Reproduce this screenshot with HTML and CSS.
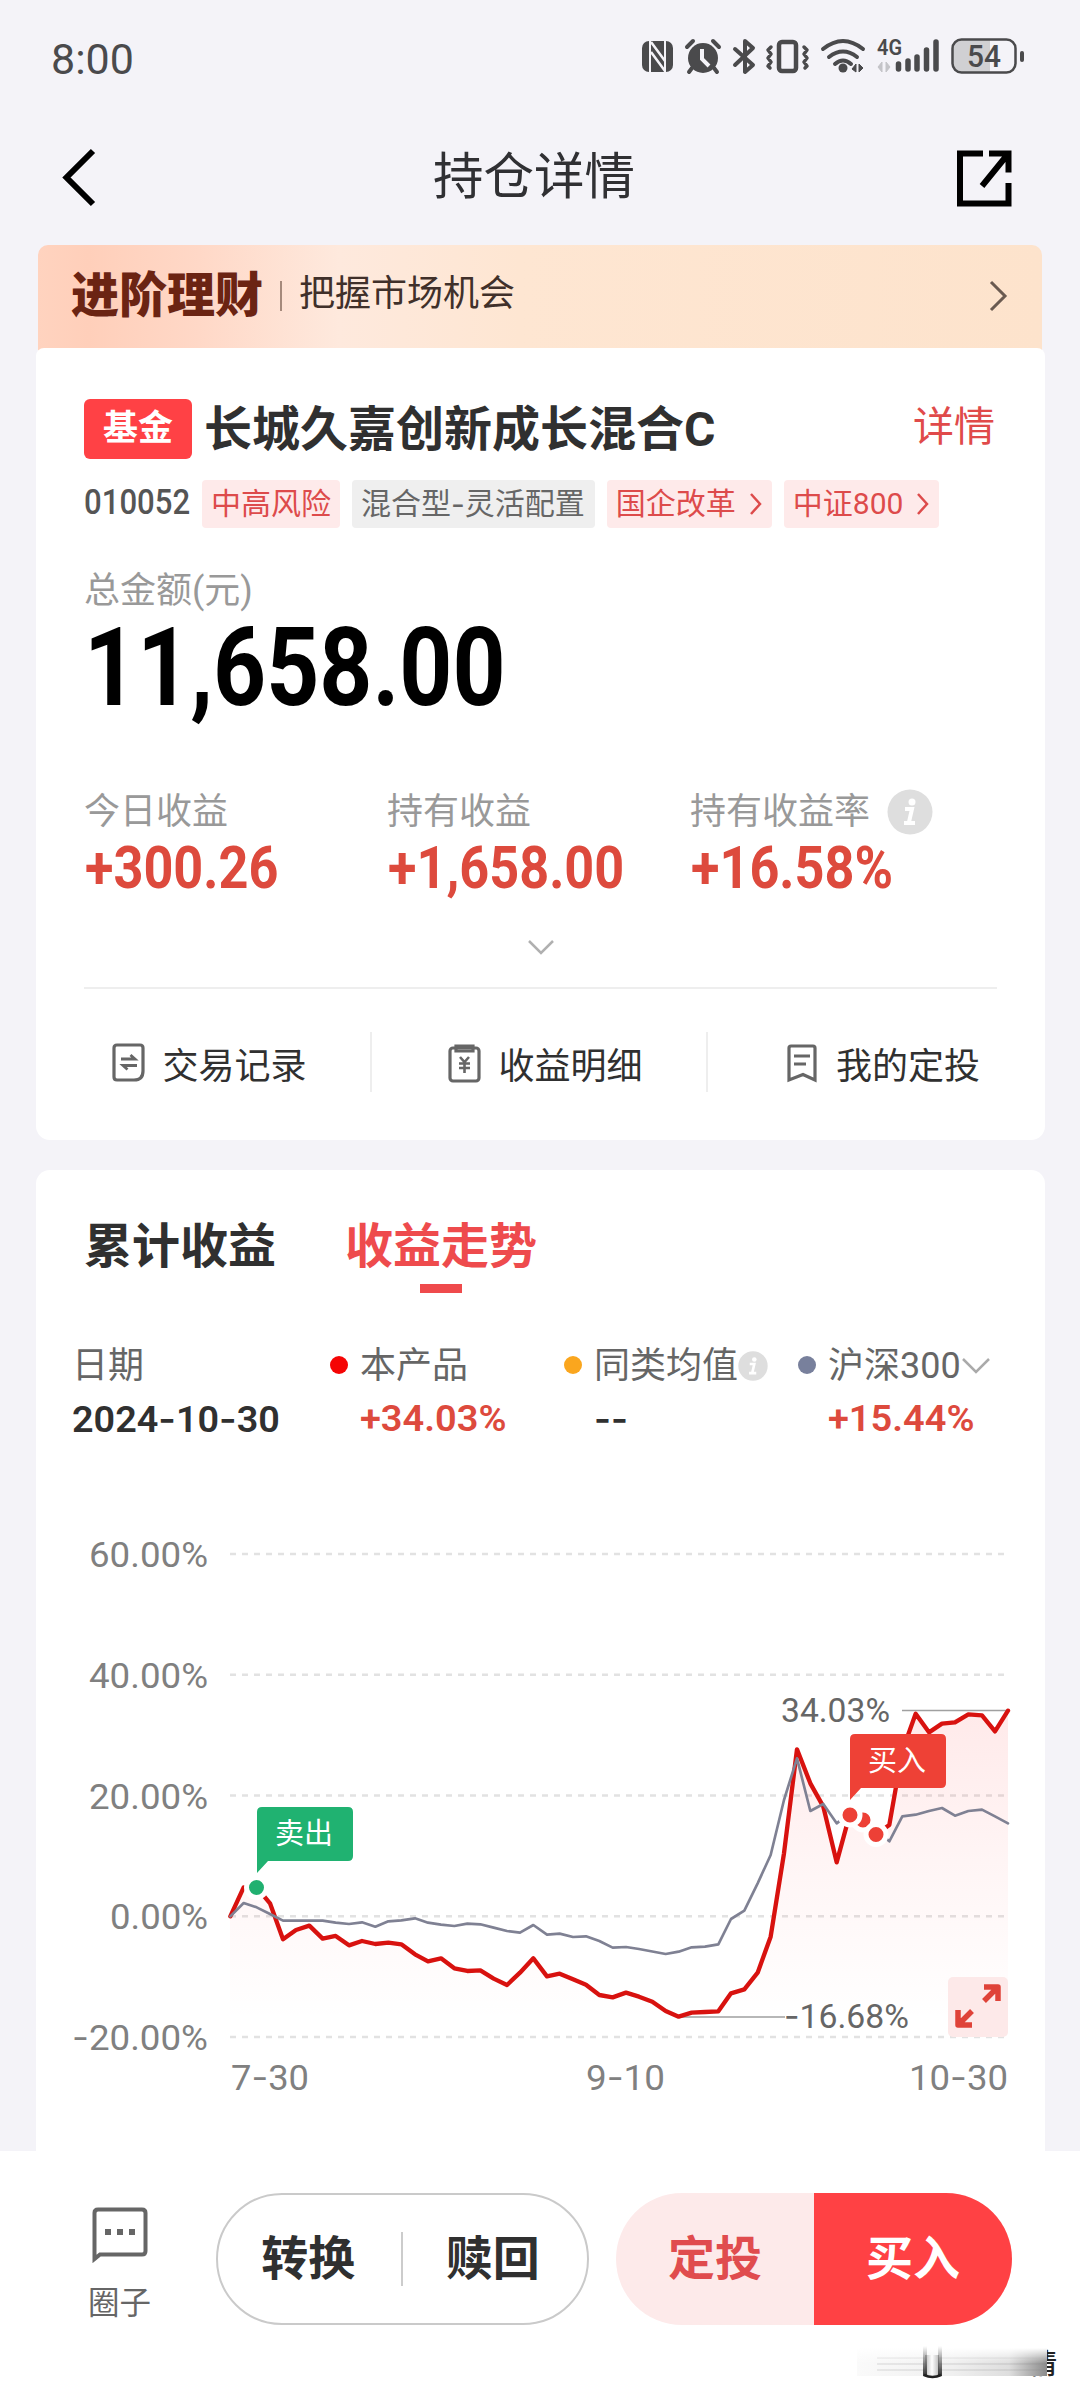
FILE: index.html
```html
<!DOCTYPE html>
<html lang="zh-CN">
<head>
<meta charset="utf-8">
<title>持仓详情</title>
<link rel="stylesheet" href="styles.css">
</head>
<body>
<div class="screen">
  <div class="status">
    <span class="clock">8:00</span>
    <svg class="status-icons" width="390" height="40" viewBox="0 0 390 40">
      <g fill="#4a4a4c">
        <rect x="2" y="2" width="31" height="31" rx="7"/>
        <path d="M10 2v31M25 2v31" stroke="#f4f3f8" stroke-width="2"/>
        <path d="M11 3l14 19M11 13l14 19" stroke="#f4f3f8" stroke-width="2.500"/>
        <circle cx="63" cy="19" r="15"/>
        <path d="M47 8l6-6M79 8l-6-6M52 29l-3 4M74 29l3 4" stroke="#4a4a4c" stroke-width="4" stroke-linecap="round"/>
        <path d="M62 10v10l7 7" fill="none" stroke="#f4f3f8" stroke-width="4"/>
      </g>
      <g fill="none" stroke="#4a4a4c" stroke-width="4" stroke-linejoin="round" stroke-linecap="round">
        <path d="M95 10l18 16-8 7V2l8 7-18 17"/>
        <rect x="139" y="3" width="17" height="29" rx="3" stroke-width="4.5"/>
        <path d="M131 8l-3 3 3 4-3 4 3 4-3 4 2 2M164 8l3 3-3 4 3 4-3 4 3 4-2 2" stroke-width="3.5"/>
        <path d="M183 10q20-16 40 0M189 18q14-11 28 0M195 25q8-7 16 0"/>
      </g>
      <circle cx="203" cy="29" r="4.500" fill="#4a4a4c"/>
      <path d="M212 30l4-5v8zM219 25v8l4-4z" fill="#4a4a4c" stroke="#4a4a4c"/>
      <path d="M238 28l4-5v10zM246 23v10l4-5z" fill="#c4c4c8" stroke="#c4c4c8"/>
      <text x="237" y="16" class="net" textLength="25" lengthAdjust="spacingAndGlyphs">4G</text>
      <path d="M258.500 25v5M268 22v8M277 18v12M286.500 11v19M296 3v27" stroke="#4a4a4c" stroke-width="5.500" stroke-linecap="round"/>
      <path d="M322 1h28v32h-28q-9 0-9-9V10q0-9 9-9z" fill="#d0d0d3"/>
      <rect x="312.500" width="63" height="33" y="0.500" rx="9" fill="none" stroke="#4a4a4c" stroke-width="2.500"/>
      <rect x="380" y="12" width="4" height="11" rx="2" fill="#4a4a4c"/>
      <text x="327" y="27.500" class="batt" textLength="34" lengthAdjust="spacingAndGlyphs">54</text>
    </svg>
  </div>

  <header class="nav">
    <svg width="60" height="60" viewBox="0 0 60 60"><path d="M39 4L12.500 30.500 39 57" fill="none" stroke="#000" stroke-width="6"/></svg>
    <h1>持仓详情</h1>
    <svg width="60" height="60" viewBox="0 0 60 60"><path d="M29 6.500H6v50H54.500V36M35 6.500h19.500v19M54 7L28 39" fill="none" stroke="#000" stroke-width="6"/></svg>
  </header>

  <div class="banner">
    <b>进阶理财</b><i></i><span>把握市场机会</span>
    <svg width="20" height="32" viewBox="0 0 20 32"><path d="M2 2l14 14L2 30" fill="none" stroke="#6a5a50" stroke-width="3"/></svg>
  </div>

  <section class="card holding">
    <div class="fund">
      <span class="badge">基金</span><h2>长城久嘉创新成长混合C</h2><a>详情</a>
    </div>
    <div class="tags">
      <span class="code"><span class="fit code-fit">010052</span></span>
      <span class="tag">中高风险</span>
      <span class="tag gray">混合型<em>-</em>灵活配置</span>
      <span class="tag link">国企改革<svg width="14" height="22" viewBox="0 0 14 22"><path d="M2 1l9 10-9 10" fill="none" stroke="#dd4b4b" stroke-width="2.500"/></svg></span>
      <span class="tag link">中证800<svg width="14" height="22" viewBox="0 0 14 22"><path d="M2 1l9 10-9 10" fill="none" stroke="#dd4b4b" stroke-width="2.500"/></svg></span>
    </div>
    <div class="label total-label">总金额(元)</div>
    <div class="total"><span class="fit total-fit">11,658.00</span></div>
    <div class="stats">
      <div><div class="label">今日收益</div><div class="gain"><span class="fit">+300.26</span></div></div>
      <div><div class="label">持有收益</div><div class="gain"><span class="fit">+1,658.00</span></div></div>
      <div><div class="label">持有收益率<svg class="info" width="46" height="46" viewBox="0 0 46 46"><circle cx="23" cy="23" r="22.500" fill="#dedede"/><circle cx="25" cy="13" r="3.500" fill="#fff"/><path d="M18 20h7l-3 13M17 34h11" fill="none" stroke="#fff" stroke-width="4"/></svg></div><div class="gain"><span class="fit">+16.58%</span></div></div>
    </div>
    <div class="expand"><svg width="28" height="18" viewBox="0 0 28 18"><path d="M2 2l12 12L26 2" fill="none" stroke="#b0b0b0" stroke-width="2.500"/></svg></div>
    <div class="actions">
      <div><svg width="36" height="42" viewBox="0 0 36 42"><g fill="none" stroke="#666" stroke-width="3.200"><path d="M6 3h23q3 0 3 3v23q0 9-9 9H6q-3 0-3-3V6q0-3 3-3z"/><path d="M10 17h14l-4.500-4M26 23.500H12l4.500 4" stroke-width="2.800"/></g></svg>交易记录</div>
      <div><svg width="36" height="42" viewBox="0 0 36 42"><g fill="none" stroke="#666" stroke-width="3.200"><rect x="3" y="6" width="29" height="33" rx="3"/><path d="M9 4h17v5H9z"/><path d="M13 15l4.500 5 4.500-5M17.500 20v11M12 21.500h11M12 26h11" stroke-width="2.600"/></g></svg>收益明细</div>
      <div><svg width="36" height="42" viewBox="0 0 36 42"><g fill="none" stroke="#666" stroke-width="3.200"><path d="M6 4h22q2 0 2 2v32l-12-5.500L4 38V6q0-2 2-2z"/><path d="M9 14h16M9 22h12"/></g></svg>我的定投</div>
    </div>
  </section>

  <section class="card trend">
    <div class="tabs"><h3>累计收益</h3><h3 class="on">收益走势</h3></div>
    <div class="legend">
      <div><p>日期</p><strong><span class="fit date">2024<em>-</em>10<em>-</em>30</span></strong></div>
      <div class="dot red"><p>本产品</p><strong class="up"><span class="fit">+34.03%</span></strong></div>
      <div class="dot orange"><p>同类均值<svg class="mini" width="30" height="30" viewBox="0 0 46 46"><circle cx="23" cy="23" r="22.500" fill="#dedede"/><circle cx="25" cy="13" r="3.500" fill="#fff"/><path d="M18 20h7l-3 13M17 34h11" fill="none" stroke="#fff" stroke-width="4"/></svg></p><strong><em>--</em></strong></div>
      <div class="dot blue"><p>沪深300<svg width="30" height="18" viewBox="0 0 30 18"><path d="M2 2l13 13L28 2" fill="none" stroke="#aaa" stroke-width="2.500"/></svg></p><strong class="up"><span class="fit">+15.44%</span></strong></div>
    </div>
    <svg class="chart" width="1009" height="640" viewBox="36 1500 1009 640">
      <defs>
        <linearGradient id="area" x1="0" y1="1710" x2="0" y2="2020" gradientUnits="userSpaceOnUse">
          <stop offset="0" stop-color="#ff3c3c" stop-opacity=".11"/>
          <stop offset=".5" stop-color="#ff3c3c" stop-opacity=".05"/>
          <stop offset="1" stop-color="#ff3c3c" stop-opacity="0"/>
        </linearGradient>
      </defs>
      <path class="grid" d="M230 1554H1008M230 1674.700H1008M230 1795.600H1008M230 1916.300H1008M230 2037H1008"/>
      <path fill="url(#area)" d="M230 2037V1916L244 1888 257 1888 270 1903 283 1939 296 1930 309 1926 323 1939 336 1936 349 1945 375 1943 401 1944 428 1961 454 1968 480 1970 507 1985 533 1958 547 1976 560 1974 586 1985 612 1997 626 1993 652 2002 679 2017 718 2011 731 1993 744 1989 758 1973 771 1937 784 1853 797 1749 810 1783 823 1807 837 1862 850 1815 863 1820 876 1834 889 1825 902 1750 916 1714 929 1732 942 1724 968 1714 982 1715 995 1731 1008 1711V2037z"/>
      <path class="leader" d="M902 1710.500H1007M679 2017H785"/>
      <g transform="translate(200 1680) scale(.33333)" fill="none" stroke-linejoin="round" stroke-linecap="round">
        <polyline stroke="#d8120f" stroke-width="13" points="91,709 131,622 170,622 210,670 249,778 288,750 328,737 368,776 407,768 447,796 486,783 526,792 565,788 604,793 645,823 684,844 723,835 763,865 802,873 841,871 881,896 921,915 960,878 1000,835 1041,889 1079,881 1119,898 1158,914 1198,945 1238,952 1278,938 1317,950 1357,965 1397,993 1436,1010 1475,998 1515,996 1555,994 1593,940 1633,928 1673,878 1712,770 1752,520 1791,208 1831,310 1870,380 1910,547 1949,404 1988,420 2028,463 2068,435 2107,213 2147,101 2187,157 2226,131 2265,127 2305,103 2346,106 2385,154 2424,92"/>
        <polyline stroke="#7f8193" stroke-width="8" points="91,709 131,669 170,682 210,702 249,722 368,722 407,728 447,732 486,727 526,740 565,724 604,721 645,715 684,728 723,734 763,738 802,731 841,733 881,743 921,753 960,758 1000,735 1041,764 1079,761 1119,771 1158,769 1198,783 1238,803 1278,801 1317,807 1397,822 1436,815 1475,802 1515,800 1555,793 1593,717 1633,692 1673,610 1712,525 1752,360 1791,235 1831,393 1870,372 1910,430 1949,400 1988,447 2028,450 2068,484 2107,409 2147,404 2187,393 2226,384 2265,407 2305,393 2346,389 2385,409 2424,430"/>
      </g>
      <g stroke="#fff" stroke-width="5">
        <circle cx="256.500" cy="1887.500" r="10" fill="#20b070"/>
        <circle cx="863" cy="1820" r="10" fill="#ed4036"/>
        <circle cx="850" cy="1815" r="10" fill="#ed4036"/>
        <circle cx="876" cy="1834.500" r="10" fill="#ed4036"/>
      </g>
      <path fill="#20b271" d="M262 1807h86q5 0 5 5v44q0 5-5 5h-80l-11 12v-61q0-5 5-5z"/>
      <path fill="#ee4136" d="M855 1734h86q5 0 5 5v44q0 5-5 5h-80l-11 12v-61q0-5 5-5z"/>
      <text class="flag" x="275" y="1843.500">卖出</text>
      <text class="flag" x="868" y="1770.500">买入</text>
      <g class="axis">
        <text x="89" y="1566.500" textLength="119" lengthAdjust="spacingAndGlyphs">60.00%</text>
        <text x="89" y="1687.500" textLength="119" lengthAdjust="spacingAndGlyphs">40.00%</text>
        <text x="89" y="1808.500" textLength="119" lengthAdjust="spacingAndGlyphs">20.00%</text>
        <text x="110" y="1929" textLength="98" lengthAdjust="spacingAndGlyphs">0.00%</text>
        <text x="72" y="2049.500" textLength="136" lengthAdjust="spacingAndGlyphs"><tspan class="dash">-</tspan>20.00%</text>
        <text x="231" y="2089.500" textLength="78" lengthAdjust="spacingAndGlyphs">7<tspan class="dash">-</tspan>30</text>
        <text x="586" y="2089.500" textLength="79" lengthAdjust="spacingAndGlyphs">9<tspan class="dash">-</tspan>10</text>
        <text x="909" y="2089.500" textLength="99" lengthAdjust="spacingAndGlyphs">10<tspan class="dash">-</tspan>30</text>
      </g>
      <g class="axis dark">
        <text x="781" y="1721.500" textLength="109" lengthAdjust="spacingAndGlyphs">34.03%</text>
        <text x="784" y="2027.500" textLength="125" lengthAdjust="spacingAndGlyphs"><tspan class="dash">-</tspan>16.68%</text>
      </g>
      <rect x="948" y="1977" width="60" height="60" rx="5" fill="#fde9e9"/>
      <path d="M984 2001l13-13M984 1987h14v14M972 2011l-13 13M958 2010v15h14" fill="none" stroke="#df4339" stroke-width="5.500" stroke-linejoin="round"/>
    </svg>
  </section>

  <footer class="bar">
    <div class="circle">
      <svg width="56" height="56" viewBox="0 0 56 56"><path d="M2.500 52V6q0-3.500 3.500-3.500h44q3.500 0 3.500 3.500v38q0 3.500-3.500 3.500H8z" fill="none" stroke="#666" stroke-width="4"/><path d="M13 22h6v6h-6zM25 22h6v6h-6zM37 22h6v6h-6z" fill="#666"/></svg>
      <span>圈子</span>
    </div>
    <div class="pill line"><b>转换</b><b>赎回</b></div>
    <div class="pill fill"><b>定投</b><b>买入</b></div>
    <div class="mark">
      <span>情</span>
      <svg width="200" height="38" viewBox="0 0 200 38">
        <defs>
          <linearGradient id="smear"><stop offset="0" stop-color="#fafafa"/><stop offset=".5" stop-color="#f0f0f0"/><stop offset=".8" stop-color="#dedede"/><stop offset="1" stop-color="#8c8c8c"/></linearGradient>
          <linearGradient id="top" x2="0" y2="1"><stop offset="0" stop-color="#fff"/><stop offset=".55" stop-color="#fff" stop-opacity="0"/></linearGradient>
          <linearGradient id="stem" x2="0" y2="1"><stop offset="0" stop-color="#333" stop-opacity="0"/><stop offset="1" stop-color="#333"/></linearGradient>
          <linearGradient id="core"><stop offset="0" stop-color="#bbb"/><stop offset=".5" stop-color="#fff"/><stop offset="1" stop-color="#bbb"/></linearGradient>
        </defs>
        <rect y="2" width="190" height="28" fill="url(#smear)"/>
        <path d="M20 12H190M20 18H190M20 24H190" stroke="#888" stroke-opacity=".15" stroke-width="2"/>
        <rect y="2" width="190" height="28" fill="url(#top)"/>
        <rect x="68" y="9" width="14" height="21" fill="url(#core)"/>
        <path d="M66 0h4v30h-4zM81 0h4v30h-4z" fill="url(#stem)"/>
        <path d="M67 29q8.500 4 17 0" fill="none" stroke="#222" stroke-width="2.500"/>
      </svg>
    </div>
  </footer>
</div>
</body>
</html>
```
FILE: styles.css
```css
* { box-sizing: border-box; margin: 0; padding: 0; }
body { background: #f4f3f8; font-family: Roboto, "Noto Sans CJK SC", sans-serif; color: #303030; }
svg { display: block; flex: none; }
em, i { font-style: normal; }
.screen { width: 1080px; height: 2400px; overflow: hidden; display: flex; flex-direction: column; }

.status { height: 118px; padding: 0 51px; display: flex; align-items: center; justify-content: space-between; }
.clock { font-size: 43px; line-height: 50px; color: #4a4a4c; }
.status-icons { margin-right: -1px; overflow: visible; }
.net { font: 600 22px Roboto, sans-serif; fill: #4a4a4c; }
.batt { font: 500 32px Roboto, sans-serif; fill: #4a4a4c; }

.nav { height: 127px; padding: 0 66px 10px 54px; display: flex; align-items: center; justify-content: space-between; }
.nav h1 { font-size: 50.5px; line-height: 60px; font-weight: 400; color: #303033; }

.banner { height: 113px; margin: 0 38px -10px; padding: 0 33px 11px; border-radius: 10px 10px 0 0; display: flex; align-items: center; background: linear-gradient(90deg, #ffd3bf 0, #ffcfba 5%, #ffd8c7 16%, #fee9dd 30%, #fee6d2 48%, #fde3cc 100%); }
.banner b { font-size: 48px; line-height: 60px; font-weight: 900; color: #6b2413; }
.banner i { width: 2px; height: 30px; margin: 0 17px; background: #a58a7c; }
.banner span { font-size: 36px; line-height: 50px; padding-bottom: 5px; color: #40302a; flex: 1; }

.card { width: 1009px; margin-left: 36px; background: #fff; position: relative; }
.holding { height: 792px; border-radius: 8px 8px 14px 14px; padding: 51px 48px 0; display: flex; flex-direction: column; }
.fund { height: 60px; display: flex; align-items: center; }
.badge { width: 108px; height: 60px; border-radius: 6px; background: #ff4145; color: #fff; font-size: 35px; font-weight: 700; text-align: center; line-height: 60px; }
.fund h2 { margin-left: 12px; padding-top: 2px; font-size: 48px; line-height: 60px; font-weight: 700; flex: 1; }
.fund a { font-size: 41px; line-height: 60px; padding: 0 2px 4px 0; color: #e04a4a; }
.tags { margin-top: 21px; height: 48px; display: flex; align-items: center; gap: 12px; }
.fit { display: inline-block; transform-origin: 0 50%; }
.code { width: 106px; font-size: 35px; line-height: 46px; padding-bottom: 2px; color: #555; font-weight: 500; }
.code-fit { transform: scaleX(.89); }
.tag { height: 48px; padding: 0 9px; border-radius: 4px; background: #feeaea; color: #dd4b4b; font-size: 30px; line-height: 46px; white-space: nowrap; display: flex; align-items: center; }
.tag.gray { background: #efefef; color: #666; padding-right: 10px; }
.tag em { font-family: Inter, sans-serif; }
.tag svg { margin-left: 13px; }
.label { font-size: 36px; line-height: 44px; color: #999; display: flex; align-items: center; }
.total-label { margin-top: 41px; }
.total { height: 110px; font-size: 110px; line-height: 110px; color: #000; font-weight: 700; white-space: nowrap; }
.total-fit { transform: scaleX(.842); }
.stats { margin-top: 67px; display: grid; grid-template-columns: 303px 303px 303px; height: 119px; }
.stats .label { height: 44px; }
.info { margin-left: 17px; }
.gain { font-size: 59px; line-height: 66px; font-weight: 700; color: #dd4a3d; white-space: nowrap; }
.gain .fit { transform: scaleX(.885); margin: 1px 0 0 1px; }
.expand { height: 80px; display: flex; justify-content: center; padding-top: 30px; border-bottom: 2px solid #eee; }
.actions { margin: 43px -48px 0; height: 60px; display: grid; grid-template-columns: 334px 336px 339px; }
.actions div { display: flex; align-items: center; justify-content: center; font-size: 36px; gap: 15px; padding: 1px 0 0 12px; border-left: 2px solid #eee; }
.actions div:first-child { border-left: 0; }

.trend { margin-top: 30px; height: 981px; border-radius: 14px 14px 0 0; flex: none; }
.tabs { height: 126px; padding: 42px 48px 0; display: flex; gap: 69px; }
.tabs h3 { font-size: 48px; line-height: 70px; font-weight: 700; display: flex; flex-direction: column; align-items: center; }
.tabs .on { color: #ee4b4d; }
.tabs .on::after { content: ""; width: 42px; height: 9px; margin-top: 2px; background: #ef4a4c; }
.legend { height: 204px; padding: 46px 0 0 36px; display: grid; grid-template-columns: 288px 234px 234px 1fr; align-content: start; }
.legend p { font-size: 36px; line-height: 48px; color: #666; display: flex; align-items: center; white-space: nowrap; }
.legend strong { display: block; font-size: 36.500px; line-height: 50px; margin-top: 4px; font-weight: 600; white-space: nowrap; }
.legend em, .dash { font-family: Inter, sans-serif; }
.legend .fit { transform: scaleX(1.04); }
.legend .date { transform: scaleX(1.035); }
.legend .up { color: #dd4a3d; }
.dot { position: relative; }
.dot::before { content: ""; position: absolute; left: -30px; top: 14px; width: 18px; height: 18px; border-radius: 50%; }
.red::before { background: #f50505; }
.orange::before { background: #faa61e; }
.blue::before { background: #78809c; }
.grid { fill: none; stroke: #e2e2e2; stroke-width: 2.5; stroke-dasharray: 6 6; }
.leader { stroke: #a0a0a0; stroke-width: 1.6; }
.flag { font: 400 29px "Noto Sans CJK SC", sans-serif; fill: #fff; }
.axis { font: 400 35.500px Roboto, sans-serif; fill: #808080; }
.axis.dark { fill: #666; font-size: 34px; }

.bar { position: relative; height: 249px; flex: none; background: #fff; display: flex; padding: 42px 0 0 88px; }
.circle { width: 128px; padding-top: 14px; font-size: 31.500px; color: #666; }
.circle svg { margin-left: 4px; }
.circle span { display: block; margin-top: 21px; line-height: 40px; }
.pill { height: 132px; border-radius: 66px; display: flex; overflow: hidden; }
.pill b { flex: 1; font-size: 47px; line-height: 132px; text-align: center; }
.line { width: 373px; border: 2px solid #cacaca; align-items: center; }
.line b { line-height: 54px; }
.line b:first-child { padding-right: 2px; }
.line b + b { padding-right: 4px; border-left: 2px solid #ccc; }
.fill { width: 396px; margin-left: 27px; background: #fdeaea; }
.fill b { color: #e04c4e; }
.fill b + b { background: #ff4144; color: #fff; }
.mark { position: absolute; left: 857px; top: 195px; width: 200px; height: 38px; display: grid; justify-items: end; }
.mark > * { grid-area: 1 / 1; }
.mark span { font: 500 28px/32px "Noto Sans CJK SC", sans-serif; color: #222; }
```
